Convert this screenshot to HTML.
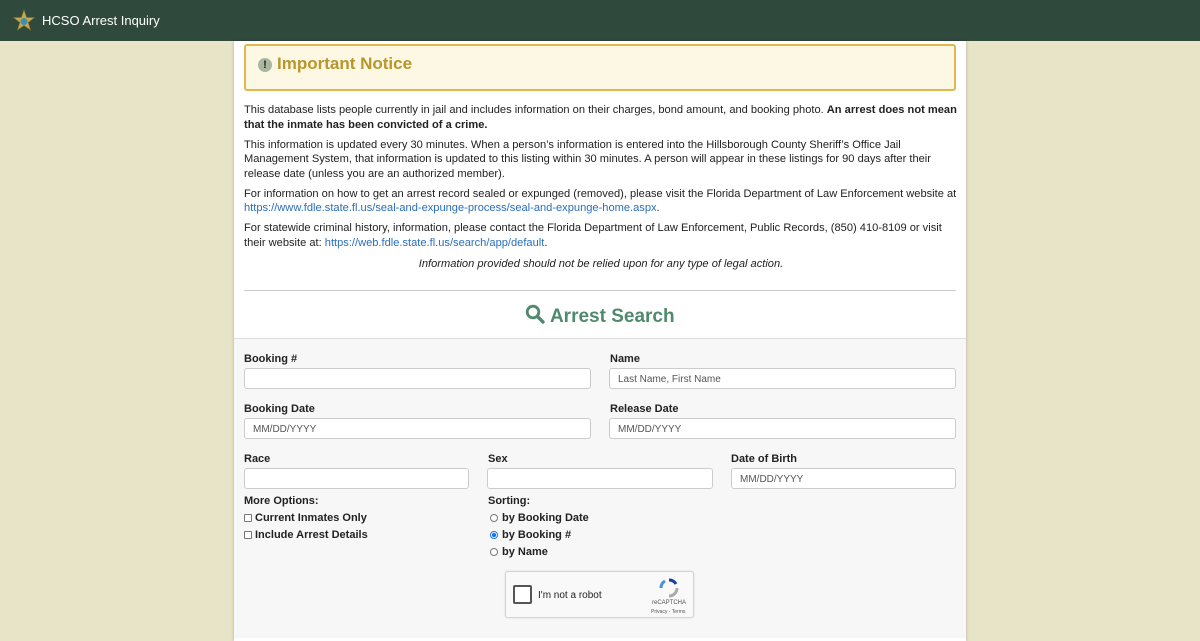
<!DOCTYPE html>
<html><head><meta charset="utf-8"><style>
*{box-sizing:border-box;margin:0;padding:0}
body{width:1200px;height:620px;overflow:hidden;background:#e8e4c7;font-family:"Liberation Sans",Arial,sans-serif;font-size:11px;color:#222}
.hdr{height:41px;background:#2f4a3c;color:#fff;display:flex;align-items:center;padding-left:12px;font-size:13px}
.hdr svg{margin-right:6px}
.panel{position:absolute;left:234px;top:41px;width:732px;height:600px;background:#fff;box-shadow:0 0 3px rgba(0,0,0,.25)}
.notice{position:absolute;left:10px;top:3px;width:712px;height:47px;border:2px solid #e2b84a;border-radius:3px;background:#fdf8e3}
.notice h2{position:absolute;left:31px;top:8px;font-size:17px;color:#b8962c;font-weight:bold}
.ic{position:absolute;left:12px;top:12px;width:14px;height:14px;border-radius:50%;background:#a9b7a0;color:#222;font-weight:bold;font-size:11px;text-align:center;line-height:14px}
.txt{position:absolute;left:10px;top:62px;width:714px;line-height:14.5px;font-size:11.1px}
.txt p{margin-bottom:5.5px}
a{color:#2a6ebb;text-decoration:none}
.hr{position:absolute;left:10px;top:249px;width:712px;border-top:1px solid #ccc}
.st{position:absolute;left:0;top:263px;width:732px;text-align:center;font-size:19px;font-weight:bold;color:#4f8a6c}
.form{position:absolute;left:0;top:297px;width:732px;height:300px;background:#f7f7f7;border-top:1px solid #ddd}
.l{position:absolute;font-weight:bold;font-size:11px}
.in{position:absolute;height:21px;border:1px solid #ccc;border-radius:3px;background:#fff;font-size:10px;color:#555;padding:5px 0 0 8px}
.cb{position:absolute;font-weight:bold;font-size:11px;display:flex;align-items:center}
.cb i{display:inline-block;width:8px;height:8px;border:1px solid #777;border-radius:1px;margin-right:3px;background:#fff}
.cb i.r{border-radius:50%;margin-left:2px;margin-right:4px}
.cb i.on{border-color:#1a73e8;background:radial-gradient(#1a73e8 45%,#fff 55%)}
.cap{position:absolute;left:271px;top:232px;width:189px;height:47px;background:#f9f9f9;border:1px solid #d3d3d3;border-radius:3px;box-shadow:0 0 2px rgba(0,0,0,.1)}
</style></head><body>
<div class="hdr"><svg width="24" height="24" viewBox="0 0 24 24"><polygon points="12,1 14.6,8.5 22.5,8.6 16.2,13.4 18.5,21 12,16.5 5.5,21 7.8,13.4 1.5,8.6 9.4,8.5" fill="#c9a64a" stroke="#8a7030" stroke-width=".6"/><circle cx="12" cy="12.5" r="3.5" fill="#3d8fb0"/></svg>HCSO Arrest Inquiry</div>
<div class="panel">
<div class="notice"><div class="ic">!</div><h2>Important Notice</h2></div>
<div class="txt">
<p>This database lists people currently in jail and includes information on their charges, bond amount, and booking photo. <b>An arrest does not mean that the inmate has been convicted of a crime.</b></p>
<p>This information is updated every 30 minutes. When a person’s information is entered into the Hillsborough County Sheriff’s Office Jail Management System, that information is updated to this listing within 30 minutes. A person will appear in these listings for 90 days after their release date (unless you are an authorized member).</p>
<p>For information on how to get an arrest record sealed or expunged (removed), please visit the Florida Department of Law Enforcement website at <a>https://www.fdle.state.fl.us/seal-and-expunge-process/seal-and-expunge-home.aspx</a>.</p>
<p>For statewide criminal history, information, please contact the Florida Department of Law Enforcement, Public Records, (850) 410-8109 or visit their website at: <a>https://web.fdle.state.fl.us/search/app/default</a>.</p>
<p style="text-align:center;font-style:italic;margin-top:7px">Information provided should not be relied upon for any type of legal action.</p>
</div>
<div class="hr"></div>
<div class="st"><svg width="20" height="20" viewBox="0 0 20 20" style="vertical-align:-2px"><circle cx="8" cy="8" r="5.8" fill="none" stroke="#4f8a6c" stroke-width="2.8"/><line x1="12.3" y1="12.3" x2="18" y2="18" stroke="#4f8a6c" stroke-width="3.4" stroke-linecap="round"/></svg> Arrest Search</div>
<div class="form">
<div class="l" style="left:10px;top:14px">Booking #</div><div class="in" style="left:10px;top:29px;width:347px"></div>
<div class="l" style="left:376px;top:14px">Name</div><div class="in" style="left:375px;top:29px;width:347px">Last Name, First Name</div>
<div class="l" style="left:10px;top:64px">Booking Date</div><div class="in" style="left:10px;top:79px;width:347px">MM/DD/YYYY</div>
<div class="l" style="left:376px;top:64px">Release Date</div><div class="in" style="left:375px;top:79px;width:347px">MM/DD/YYYY</div>
<div class="l" style="left:10px;top:114px">Race</div><div class="in" style="left:10px;top:129px;width:225px"></div>
<div class="l" style="left:254px;top:114px">Sex</div><div class="in" style="left:253px;top:129px;width:226px"></div>
<div class="l" style="left:497px;top:114px">Date of Birth</div><div class="in" style="left:497px;top:129px;width:225px">MM/DD/YYYY</div>
<div class="l" style="left:10px;top:156px">More Options:</div>
<div class="cb" style="left:10px;top:173px"><i></i>Current Inmates Only</div>
<div class="cb" style="left:10px;top:190px"><i></i>Include Arrest Details</div>
<div class="l" style="left:254px;top:156px">Sorting:</div>
<div class="cb" style="left:254px;top:173px"><i class="r"></i>by Booking Date</div>
<div class="cb" style="left:254px;top:190px"><i class="r on"></i>by Booking #</div>
<div class="cb" style="left:254px;top:207px"><i class="r"></i>by Name</div>
<div class="cap"><div style="position:absolute;left:7px;top:13px;width:19px;height:19px;border:2px solid #555;border-radius:2px;background:#fff"></div><div style="position:absolute;left:32px;top:18px;font-size:10px;color:#222">I'm not a robot</div>
<svg style="position:absolute;left:152px;top:5px" width="22" height="22" viewBox="0 0 22 22"><path d="M11 3a8 8 0 0 1 7 4" stroke="#1c3aa9" stroke-width="3" fill="none"/><path d="M19 11a8 8 0 0 1-8 8" stroke="#aaa" stroke-width="3" fill="none"/><path d="M3 11a8 8 0 0 1 4-7" stroke="#4a90e2" stroke-width="3" fill="none"/></svg>
<div style="position:absolute;left:146px;top:28px;font-size:6px;color:#555">reCAPTCHA</div><div style="position:absolute;left:145px;top:37px;font-size:5px;color:#555">Privacy - Terms</div></div>
</div>
</div>
</body></html>
